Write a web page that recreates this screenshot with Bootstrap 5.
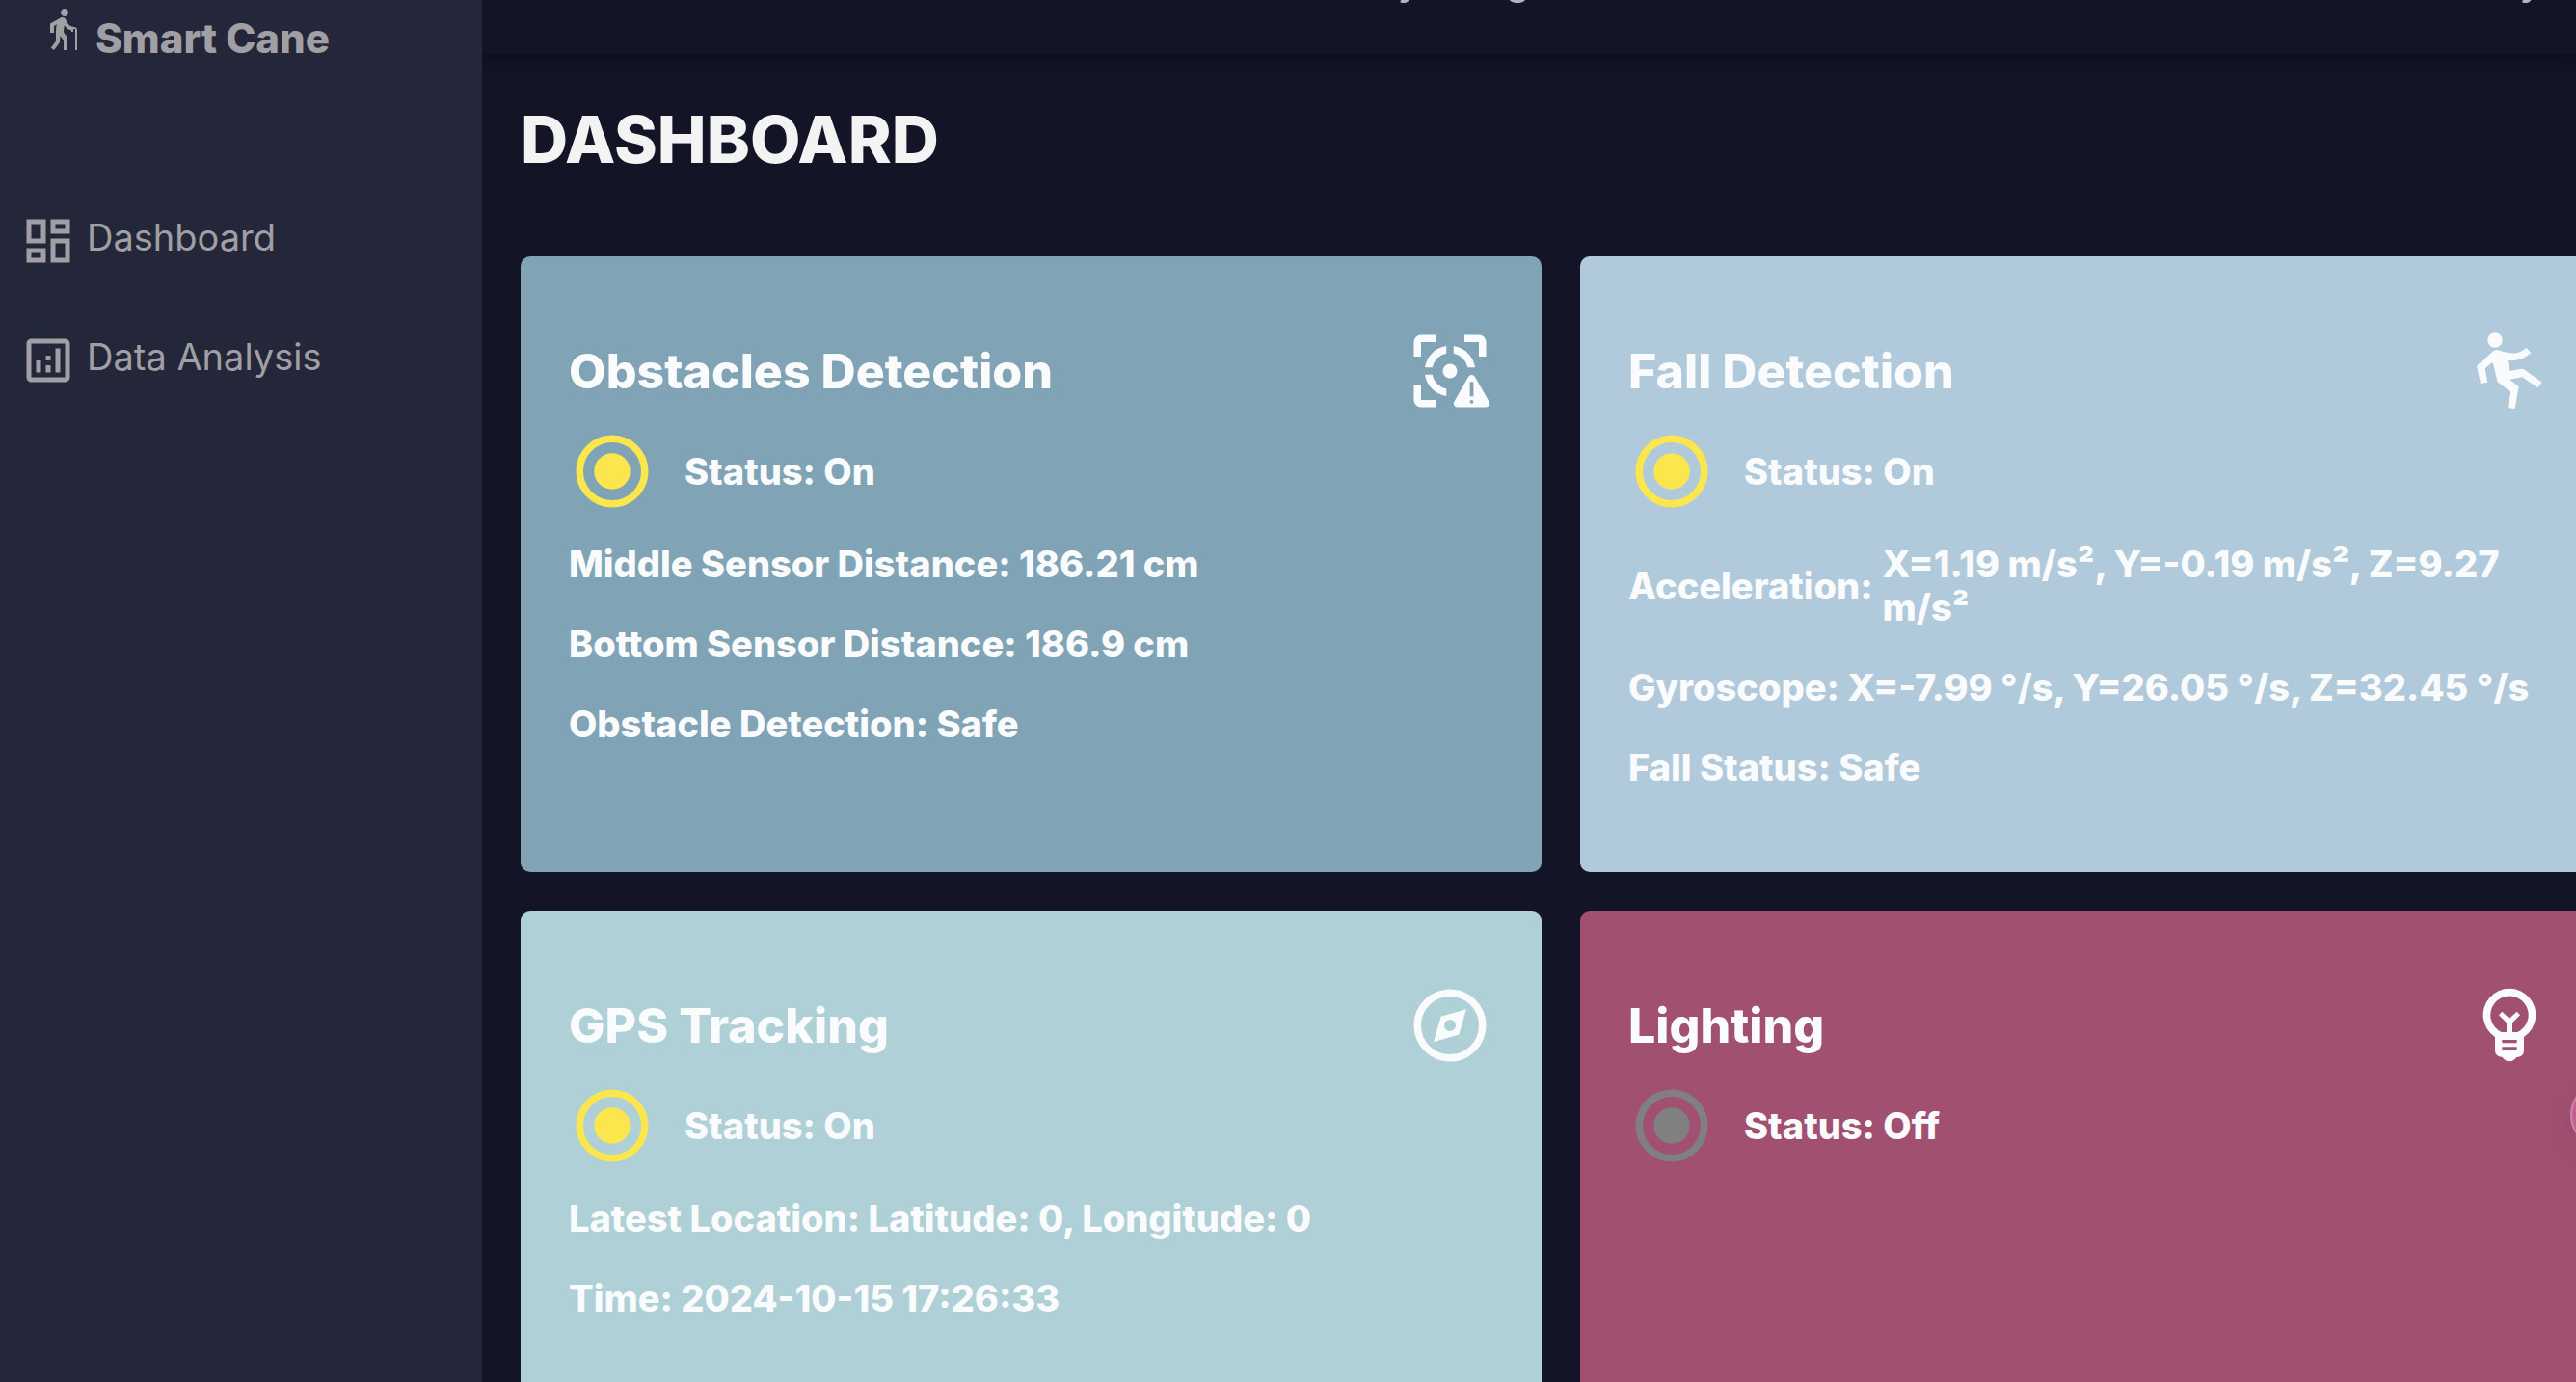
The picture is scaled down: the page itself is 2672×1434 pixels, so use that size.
<!DOCTYPE html>
<html lang="en">
<head>
<meta charset="utf-8">
<meta name="viewport" content="width=device-width, initial-scale=1">
<title>Smart Cane - Dashboard</title>
<link href="https://cdn.jsdelivr.net/npm/bootstrap@5.3.0/dist/css/bootstrap.min.css" rel="stylesheet">
<style>
  body { background: #131426; color: #f3f3f3; font-family: Inter, "Open Sans", sans-serif; }
  .side-panel { flex: 0 0 500px; background: #24273a; padding: 6px 20px; color: #a09fa3; }
  .side-brand { font-size: 42px; line-height: 68px; font-weight: 800; padding-left: 20px; margin-bottom: 146px; gap: 11px; }
  .side-link { color: #a09fa3; font-size: 38px; line-height: 60px; padding: 0; margin-bottom: 64px; gap: 10px; }
  .side-link span { margin-top: -8px; }
  .side-link:hover, .side-link:focus { color: #fff; }
  .ico-brand { width: 48px; height: 48px; }
  .ico-side { width: 60px; height: 60px; }
  .ico-tile { width: 90px; height: 90px; }
  svg { fill: currentColor; flex: none; }
  .main-area { min-width: 0; }
  .top-strip { height: 56px; box-shadow: 0 6px 12px #110f1a; color: #b5b5b8; font-size: 38px; font-weight: 600; line-height: 46px; padding: 0 36px 0 950px; }
  .top-strip span { margin-top: -42px; }
  .top-strip .strip-words { gap: 90px; }
  .page-pad { padding: 49px 0 0 40px; }
  .page-title { font-size: 68px; line-height: 78px; font-weight: 800; margin-bottom: 83px; }
  .tile-row { --bs-gutter-x: 40px; --bs-gutter-y: 40px; margin-right: -46px; }
  .tile { border: 0; border-radius: 10px; padding: 74px 50px 46px; min-height: 639px; color: #fafbfd; font-size: 38px; line-height: 45px; font-weight: 800; }
  .tile h2 { font-size: 50px; line-height: 60px; font-weight: 800; margin: 0; }
  .tile-status { margin: 14px 0 29px; gap: 30px; }
  .tile p { margin: 0 0 38px; gap: 10px; }
  .lamp-on { color: #fbe64d; }
  .lamp-off { color: #808080; }
  .tile-obstacle { background: #80a4b6; }
  .tile-fall { background: #b1cadb; }
  .tile-gps { background: #aed0d6; }
  .tile-light { background: #a15072; }
  .float-btn { position: fixed; right: -64px; top: 1122px; width: 70px; height: 70px; border: 2px solid #cb86a6; background: #c4608f; box-shadow: 0 12px 24px rgba(140, 70, 90, .4); }
</style>
<script src="https://cdn.jsdelivr.net/npm/bootstrap@5.3.0/dist/js/bootstrap.bundle.min.js"></script>
</head>
<body>
<svg class="d-none" aria-hidden="true">
  <symbol id="lamp" viewBox="0 0 24 24"><circle cx="12" cy="12" r="9" fill="none" stroke="currentColor" stroke-width="2"/><circle cx="12" cy="12" r="5"/></symbol>
</svg>
<div class="d-flex vh-100 overflow-hidden">
  <aside class="side-panel">
    <div class="side-brand d-flex align-items-start">
      <svg class="ico-brand" viewBox="0 0 24 24" aria-hidden="true"><path d="M13.5 5.5c1.1 0 2-.9 2-2s-.9-2-2-2-2 .9-2 2 .9 2 2 2zm6.5 7V23h-1V12.500c0-.28-.22-.5-.5-.5s-.5.22-.5.5v1h-1v-.69c-1.460-.38-2.700-1.290-3.510-2.520-.31.87-.49 1.780-.49 2.710 0 .23.02.46.03.69L15 16.500V23h-2v-5l-1.780-2.540L11 19l-3 4-1.600-1.200L9 18.330V13c0-1.150.18-2.290.5-3.390L8 10.460V14H6V9.300l5.400-3.070v.01c.59-.31 1.320-.33 1.940.03.36.21.63.51.8.85l.79 1.670C15.570 10.120 16.910 11 18.500 11c.83 0 1.500.67 1.500 1.500z"/></svg>
      <span>Smart Cane</span>
    </div>
    <nav class="nav flex-column" aria-label="Main">
      <a class="nav-link side-link d-flex align-items-center" href="#">
        <svg class="ico-side" viewBox="0 0 24 24" aria-hidden="true"><path d="M19 5v2h-4V5h4M9 5v6H5V5h4m10 8v6h-4v-6h4M9 17v2H5v-2h4M21 3h-8v6h8V3zM11 3H3v10h8V3zm10 8h-8v10h8V11zm-10 4H3v6h8v-6z"/></svg>
        <span>Dashboard</span>
      </a>
      <a class="nav-link side-link d-flex align-items-center" href="#">
        <svg class="ico-side" viewBox="0 0 24 24" aria-hidden="true"><path d="M19 3H5c-1.100 0-2 .9-2 2v14c0 1.100.9 2 2 2h14c1.100 0 2-.9 2-2V5c0-1.100-.9-2-2-2zm0 16H5V5h14v14zM7 12h2v5H7zm8-5h2v10h-2zm-4 7h2v3h-2zm0-4h2v2h-2z"/></svg>
        <span>Data Analysis</span>
      </a>
    </nav>
  </aside>

  <div class="main-area flex-grow-1 overflow-hidden">
    <header class="top-strip d-flex justify-content-between align-items-start">
      <div class="strip-words d-flex"><span>y</span><span>g</span></div>
      <span>y</span>
    </header>
    <main class="page-pad">
      <h1 class="page-title">DASHBOARD</h1>
      <div class="row tile-row">
        <div class="col-6">
          <section class="card tile tile-obstacle h-100">
            <div class="d-flex justify-content-between align-items-center">
              <h2>Obstacles Detection</h2>
              <svg class="ico-tile" viewBox="0 0 24 24" aria-hidden="true"><path d="M2 8V4a2 2 0 0 1 2-2h4v2H4v4zM16 2h4a2 2 0 0 1 2 2v4h-2V4h-4zM2 16h2v4h4v2H4a2 2 0 0 1-2-2zM11 5.070A7 7 0 0 0 5.070 11H7.100A5 5 0 0 1 11 7.100zM13 5.070A7 7 0 0 1 18.930 11H16.900A5 5 0 0 0 13 7.100zM5.070 13A7 7 0 0 0 11 18.930V16.900A5 5 0 0 1 7.100 13z"/><circle cx="12" cy="12" r="2"/><path fill-rule="evenodd" d="M17.100 13.600a1 1 0 0 1 1.800 0l4 7a1 1 0 0 1-.9 1.400h-8a1 1 0 0 1-.9-1.400zM17.500 15v4h1v-4zM17.500 20.500a.5.5 0 1 0 1 0a.5.5 0 1 0-1 0z"/></svg>
            </div>
            <div class="tile-status d-flex align-items-center"><svg class="ico-tile lamp-on" aria-hidden="true"><use href="#lamp"/></svg><span>Status: On</span></div>
            <p>Middle Sensor Distance: 186.21 cm</p>
            <p>Bottom Sensor Distance: 186.9 cm</p>
            <p>Obstacle Detection: Safe</p>
          </section>
        </div>
        <div class="col-6">
          <section class="card tile tile-fall h-100">
            <div class="d-flex justify-content-between align-items-center">
              <h2>Fall Detection</h2>
              <svg class="ico-tile" viewBox="54 60 270 270" aria-hidden="true"><circle cx="144" cy="99" r="23"/><path d="M150 129L183 138Q222 144 241 122L256 138Q225 166 183 162L190 194L232 188L290 230L277 247L229 214L189 221L218 243L206 312L183 309L193 260L152 229L137 167L113 187L121 230L99 234L87 179L139 133Q145 129 150 129z"/></svg>
            </div>
            <div class="tile-status d-flex align-items-center"><svg class="ico-tile lamp-on" aria-hidden="true"><use href="#lamp"/></svg><span>Status: On</span></div>
            <p class="d-flex align-items-center"><span>Acceleration:</span><span>X=1.19 m/s², Y=-0.19 m/s², Z=9.27 m/s²</span></p>
            <p>Gyroscope: X=-7.99 °/s, Y=26.05 °/s, Z=32.45 °/s</p>
            <p>Fall Status: Safe</p>
          </section>
        </div>
        <div class="col-6">
          <section class="card tile tile-gps h-100">
            <div class="d-flex justify-content-between align-items-center">
              <h2>GPS Tracking</h2>
              <svg class="ico-tile" viewBox="0 0 24 24" aria-hidden="true"><circle cx="12" cy="12" r="9" fill="none" stroke="currentColor" stroke-width="2"/><path fill-rule="evenodd" d="M16.500 7.500L14.500 14.500L7.500 16.500L9.500 9.500zM10.400 12a1.600 1.600 0 1 0 3.200 0a1.600 1.600 0 1 0-3.200 0z"/></svg>
            </div>
            <div class="tile-status d-flex align-items-center"><svg class="ico-tile lamp-on" aria-hidden="true"><use href="#lamp"/></svg><span>Status: On</span></div>
            <p>Latest Location: Latitude: 0, Longitude: 0</p>
            <p>Time: 2024-10-15 17:26:33</p>
          </section>
        </div>
        <div class="col-6">
          <section class="card tile tile-light h-100">
            <div class="d-flex justify-content-between align-items-center">
              <h2>Lighting</h2>
              <svg class="ico-tile" viewBox="54 57 270 270" aria-hidden="true"><path fill-rule="evenodd" d="M144 228A82 82 0 1 1 234 228V270Q234 290 211 291Q202 304 189 304Q176 304 167 291Q144 288 144 270zM164 213A59 59 0 1 1 214 213H198V184L222 160L212 149L189 170L166 149L156 160L180 184V213zM166 237V247H212V237zM166 259V269H212V259z"/></svg>
            </div>
            <div class="tile-status d-flex align-items-center"><svg class="ico-tile lamp-off" aria-hidden="true"><use href="#lamp"/></svg><span>Status: Off</span></div>
          </section>
        </div>
      </div>
    </main>
  </div>
</div>
<button type="button" class="float-btn rounded-circle" aria-label="Open assistant"></button>
</body>
</html>
